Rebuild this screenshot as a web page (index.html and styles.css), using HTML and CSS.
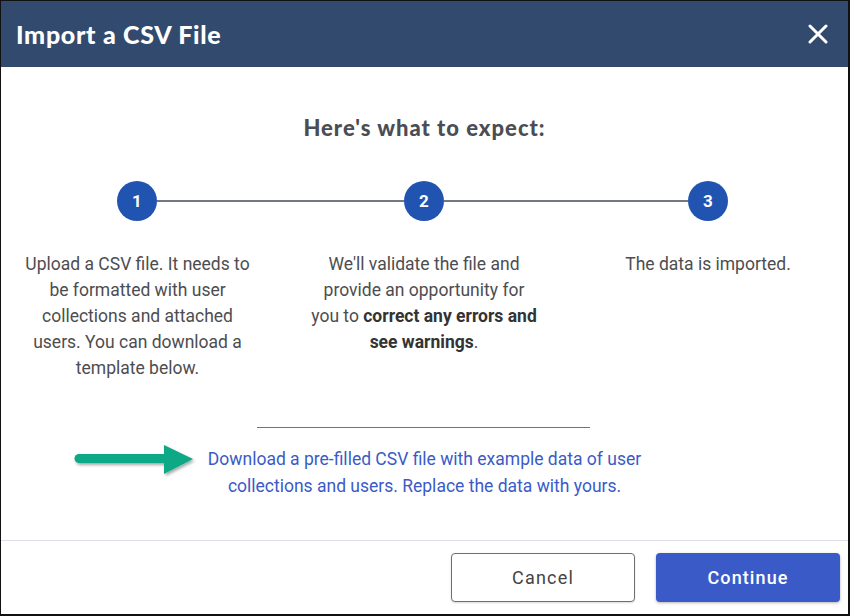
FILE: index.html
```html
<!DOCTYPE html>
<html lang="en">
<head>
<meta charset="utf-8">
<title>Import a CSV File</title>
<link rel="stylesheet" href="styles.css">
</head>
<body>
<div class="modal">
  <header class="modal-header">
    <h1 class="modal-title">Import a CSV File</h1>
    <button class="close" aria-label="Close">
      <svg width="20" height="20" viewBox="0 0 20 20"><path d="M2 2 L18 18 M18 2 L2 18" stroke="#fff" stroke-width="3" stroke-linecap="round"/></svg>
    </button>
  </header>
  <main class="modal-body">
    <h2 class="expect">Here's what to expect:</h2>
    <div class="track">
      <span class="num">1</span>
      <span class="line line-a"></span>
      <span class="num">2</span>
      <span class="line line-b"></span>
      <span class="num">3</span>
    </div>
    <div class="steps">
      <p class="step">Upload a CSV file. It needs to be formatted with user collections and attached users. You can download a template below.</p>
      <p class="step">We'll validate the file and provide an opportunity for you to <b>correct any errors and see warnings</b>.</p>
      <p class="step">The data is imported.</p>
    </div>
    <hr class="divider">
    <div class="download">
      <svg class="arrow" width="126" height="40" viewBox="0 0 126 40">
        <defs>
          <filter id="sh" x="-10%" y="-30%" width="130%" height="180%">
            <feDropShadow dx="1.5" dy="2" stdDeviation="1.6" flood-color="#000" flood-opacity="0.35"/>
          </filter>
        </defs>
        <g filter="url(#sh)">
          <path d="M6 14.5 H94" stroke="#0ea886" stroke-width="9" stroke-linecap="round"/>
          <path d="M91 1 L120 15 L91 30 Z" fill="#0ea886"/>
        </g>
      </svg>
      <a class="link" href="#">Download a pre-filled CSV file with example data of user collections and users. Replace the data with yours.</a>
    </div>
  </main>
  <footer class="modal-footer">
    <button class="btn btn-cancel">Cancel</button>
    <button class="btn btn-continue">Continue</button>
  </footer>
</div>
</body>
</html>
```

FILE: styles.css
```css
* { box-sizing: border-box; }
html, body { margin: 0; padding: 0; background: #fff; }
body { font-family: Roboto, "Liberation Sans", sans-serif; }

.modal {
  width: 850px;
  height: 616px;
  border-style: solid;
  border-color: #111;
  border-width: 1px 2px 2px 1px;
  display: flex;
  flex-direction: column;
  overflow: hidden;
}

.modal-header {
  height: 66px;
  flex: none;
  background: #324a6e;
  display: flex;
  align-items: center;
  justify-content: space-between;
  padding: 0 20px 0 15px;
}
.modal-title {
  margin: 0;
  font-family: Lato, "Open Sans", sans-serif;
  font-weight: 900;
  font-size: 25px;
  letter-spacing: 0.7px;
  color: #fff;
}
.close {
  background: none;
  border: 0;
  padding: 0;
  width: 20px;
  height: 20px;
  display: flex;
}

.modal-body {
  flex: 1;
  padding-top: 47px;
}
.expect {
  margin: 0;
  text-align: center;
  font-family: Lato, "Open Sans", sans-serif;
  font-weight: 900;
  font-size: 22px;
  letter-spacing: 1px;
  line-height: 28px;
  color: #4b4d55;
}

.track {
  display: flex;
  align-items: center;
  margin-top: 39px;
  padding-left: 116px;
}
.num {
  width: 40px;
  height: 40px;
  border-radius: 50%;
  background: #2153b0;
  color: #fff;
  font-weight: 700;
  font-size: 17px;
  display: flex;
  align-items: center;
  justify-content: center;
  flex: none;
}
.line {
  height: 2px;
  background: #737785;
  flex: none;
}
.line-a { width: 247px; }
.line-b { width: 244px; }

.steps {
  display: grid;
  grid-template-columns: 273px 300px 268px;
  margin-top: 30px;
}
.step {
  margin: 0 auto;
  max-width: 229px;
  text-align: center;
  font-size: 17.5px;
  line-height: 26px;
  color: #4d4d4f;
}
.step b { font-weight: 700; color: #333; }

.divider {
  width: 333px;
  margin: 46px auto 0;
  border: 0;
  height: 1px;
  background: #70727c;
  position: relative;
  left: -1px;
}

.download {
  display: grid;
  grid-template-columns: 1fr 440px 1fr;
  align-items: start;
  margin-top: 18px;
}
.arrow {
  justify-self: end;
  margin-right: 6px;
  margin-top: -2px;
}
.link {
  text-align: center;
  font-size: 17.5px;
  line-height: 27px;
  color: #3a5bc7;
  text-decoration: none;
}

.modal-footer {
  flex: none;
  height: 74px;
  border-top: 1px solid #dde0e6;
  display: flex;
  justify-content: flex-end;
  gap: 21px;
  padding: 12px 8px 0 0;
}
.btn {
  width: 184px;
  height: 49px;
  border-radius: 4px;
  font-family: Roboto, "Liberation Sans", sans-serif;
  font-size: 18px;
  cursor: pointer;
}
.btn-cancel {
  background: #fff;
  border: 1px solid #6f6f6f;
  color: #444;
  letter-spacing: 1.2px;
  box-shadow: 0 1px 2px rgba(0,0,0,0.15);
}
.btn-continue {
  background: #3a5bc7;
  border: 0;
  color: #fff;
  font-weight: 500;
  letter-spacing: 1.1px;
  box-shadow: 0 1px 3px rgba(0,0,0,0.3);
}
```
